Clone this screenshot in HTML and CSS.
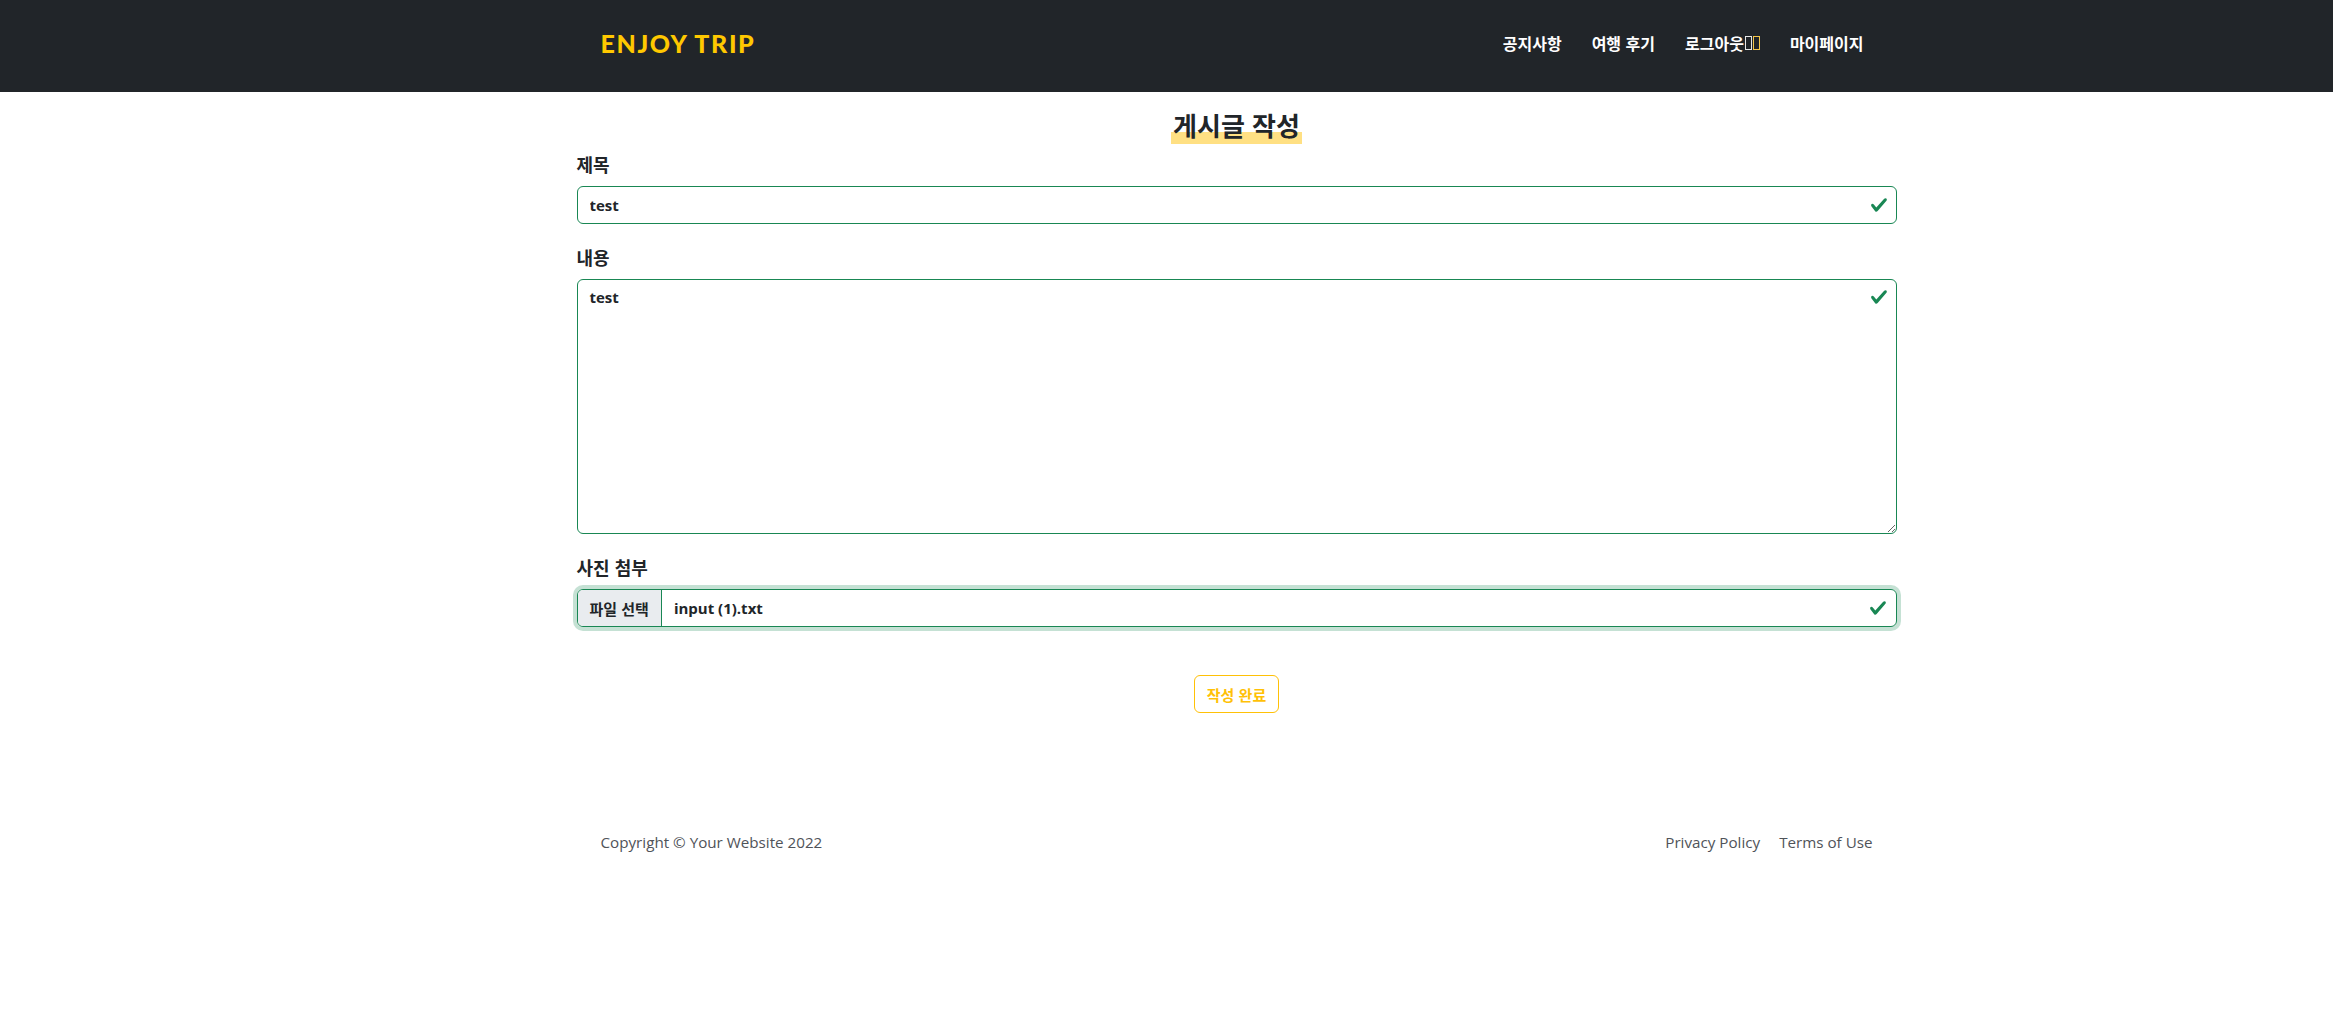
FILE: index.html
```html
<!DOCTYPE html>
<html lang="ko">
<head>
<meta charset="utf-8">
<title>게시글 작성</title>
<link rel="stylesheet" href="styles.css">
</head>
<body>
<header class="navbar">
  <div class="nav-inner">
    <a class="brand" href="#">ENJOY TRIP</a>
    <nav class="nav-links">
      <a href="#">공지사항</a>
      <a href="#">여행 후기</a>
      <a href="#">로그아웃<span class="tofu"></span><span class="tofu tofu-y"></span></a>
      <a href="#" class="last">마이페이지</a>
    </nav>
  </div>
</header>

<main class="main">
  <div class="container">
    <h2 class="page-title"><span class="hl">게시글 작성</span></h2>
    <form class="form">
      <div class="field">
        <label class="label">제목</label>
        <div class="control-wrap">
          <input class="control" type="text" value="test">
          <svg class="check" viewBox="0 0 8 8"><path fill="#198754" d="M2.3 6.73.6 4.53c-.4-1.04.46-1.4 1.1-.8l1.1 1.4 3.4-3.8c.6-.63 1.6-.27 1.2.7l-4 4.6c-.43.5-.8.4-1.1.1z"/></svg>
        </div>
      </div>
      <div class="field">
        <label class="label">내용</label>
        <div class="control-wrap">
          <textarea class="control area">test</textarea>
          <svg class="check check-top" viewBox="0 0 8 8"><path fill="#198754" d="M2.3 6.73.6 4.53c-.4-1.04.46-1.4 1.1-.8l1.1 1.4 3.4-3.8c.6-.63 1.6-.27 1.2.7l-4 4.6c-.43.5-.8.4-1.1.1z"/></svg>
        </div>
      </div>
      <div class="field">
        <label class="label">사진 첨부</label>
        <div class="file-control">
          <span class="file-btn">파일 선택</span>
          <span class="file-name">input (1).txt</span>
          <svg class="check-inline" viewBox="0 0 8 8"><path fill="#198754" d="M2.3 6.73.6 4.53c-.4-1.04.46-1.4 1.1-.8l1.1 1.4 3.4-3.8c.6-.63 1.6-.27 1.2.7l-4 4.6c-.43.5-.8.4-1.1.1z"/></svg>
        </div>
      </div>
      <div class="actions">
        <button type="button" class="btn-submit">작성 완료</button>
      </div>
    </form>
  </div>
</main>

<footer class="footer">
  <div class="footer-inner">
    <div class="copy">Copyright © Your Website 2022</div>
    <div class="footer-links">
      <a href="#">Privacy Policy</a>
      <a href="#">Terms of Use</a>
    </div>
  </div>
</footer>
</body>
</html>
```
FILE: styles.css
```css
* { box-sizing: border-box; }
html, body { margin: 0; padding: 0; }
body {
  background: #fff;
  color: #212529;
  font-family: "Open Sans", "Noto Sans CJK KR", sans-serif;
  font-size: 16px;
}
a { text-decoration: none; }

.navbar {
  background: #212529;
  height: 92px;
  padding-left: 140px;
}
.nav-inner {
  width: 1320px;
  margin: 0 auto;
  height: 100%;
  display: flex;
  align-items: center;
  justify-content: space-between;
  padding: 0 17px 6px 24px;
}
.brand {
  color: #ffc800;
  font-family: "Lato", sans-serif;
  font-weight: 900;
  font-size: 25px;
  letter-spacing: 1.6px;
}
.nav-links { display: flex; align-items: center; }
.nav-links a {
  color: #fff;
  font-family: "Noto Sans CJK KR", sans-serif;
  font-weight: 700;
  font-size: 16px;
  padding: 0 15px;
  display: flex;
  align-items: center;
}
.nav-links a.last { padding-right: 16px; }
.tofu {
  display: inline-block;
  width: 7px;
  height: 14px;
  border: 1px solid #e8e8e8;
  margin-left: 1px;
}
.tofu-y { border-color: #f3c54a; }

.main { padding-left: 140px; }
.container { width: 1320px; margin: 0 auto; }

.page-title {
  text-align: center;
  margin: 16px 0 7px;
  font-family: "Noto Sans CJK KR", sans-serif;
  font-weight: 700;
  font-size: 26px;
  line-height: 34px;
}
.hl {
  display: inline-block;
  padding: 0 2px 2px;
  background: linear-gradient(transparent 68%, #ffe083 68%);
}

.field { margin-bottom: 20px; }
.label {
  display: block;
  font-family: "Noto Sans CJK KR", sans-serif;
  font-weight: 700;
  font-size: 18px;
  line-height: 27px;
  margin-bottom: 8px;
}
.control-wrap { position: relative; }
.control {
  display: block;
  width: 100%;
  height: 38px;
  border: 1px solid #198754;
  border-radius: 6px;
  padding: 6px 42px 6px 12px;
  font-family: "Open Sans", "Noto Sans CJK KR", sans-serif;
  font-weight: 700;
  font-size: 15px;
  color: #212529;
  background: #fff;
  outline: none;
}
.area {
  height: 255px;
  resize: vertical;
  line-height: 22px;
  border-radius: 6px;
}
.check {
  position: absolute;
  right: 9px;
  top: 10px;
  width: 18px;
  height: 18px;
}
.check-top { top: 9px; }

.file-control {
  display: flex;
  align-items: stretch;
  height: 38px;
  border: 1px solid #198754;
  border-radius: 6px;
  box-shadow: 0 0 0 4px rgba(25, 135, 84, 0.25);
  overflow: hidden;
}
.file-btn {
  display: flex;
  align-items: center;
  background: #e9ecef;
  border-right: 1px solid #198754;
  padding: 0 12px;
  font-family: "Noto Sans CJK KR", sans-serif;
  font-weight: 700;
  font-size: 15px;
  color: #212529;
}
.file-name {
  flex: 1;
  display: flex;
  align-items: center;
  padding: 0 12px;
  font-weight: 700;
  font-size: 15px;
}
.check-inline {
  align-self: center;
  width: 18px;
  height: 18px;
  margin-right: 9px;
}

.actions {
  display: flex;
  justify-content: center;
  padding-top: 28px;
}
.btn-submit {
  height: 38px;
  padding: 0 12px;
  background: #fff;
  border: 1px solid #ffc107;
  border-radius: 6px;
  color: #ffc107;
  font-family: "Noto Sans CJK KR", sans-serif;
  font-weight: 700;
  font-size: 15px;
}

.footer {
  padding-left: 140px;
  margin-top: 118px;
}
.footer-inner {
  width: 1320px;
  margin: 0 auto;
  display: flex;
  justify-content: space-between;
  align-items: center;
  padding: 0 24px;
  font-family: "Open Sans", sans-serif;
  font-size: 15.2px;
  line-height: 22px;
  color: #505359;
}
.footer-links { display: flex; gap: 19px; }
.footer-links a { color: #505359; }
```
